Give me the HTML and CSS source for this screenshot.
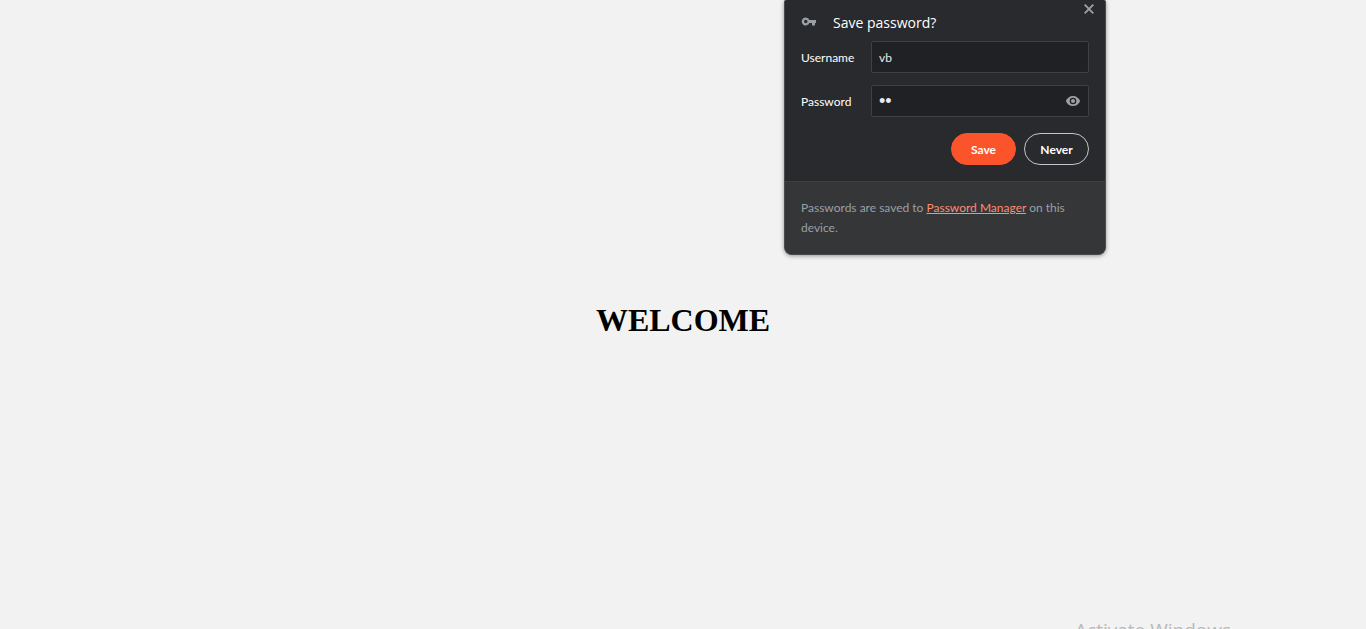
FILE: index.html
```html
<!DOCTYPE html>
<html lang="en">
<head>
<meta charset="utf-8">
<meta name="viewport" content="width=device-width, initial-scale=1">
<title>Welcome</title>
<link rel="stylesheet" href="styles.css">
</head>
<body>
<main class="page">
  <h1 class="welcome">WELCOME</h1>
</main>

<form class="dialog" aria-labelledby="dialog-title">
  <button class="close" type="button" aria-label="Close">
    <svg width="10" height="10" viewBox="0 0 10 10" aria-hidden="true"><path d="M.7.7l8.6 8.6M9.3.7L.7 9.3" stroke="currentColor" stroke-width="1.9"/></svg>
  </button>
  <div class="dialog-body">
    <header class="dialog-header">
      <svg class="key" width="16" height="16" viewBox="0 0 16 16" aria-hidden="true"><path fill="currentColor" fill-rule="evenodd" d="M8.400 5H15v3h-1v2.500h-3V8H8.400A4 4 0 1 1 8.400 5ZM4.800 4.800a1.700 1.700 0 1 0 0 3.400a1.700 1.700 0 0 0 0-3.400Z"/></svg>
      <h2 class="dialog-title" id="dialog-title">Save password?</h2>
    </header>
    <div class="fields">
      <label for="username">Username</label>
      <div class="field"><input id="username" type="text" value="vb" autocomplete="off"></div>
      <label for="password">Password</label>
      <div class="field">
        <input class="secret" id="password" type="password" value="vb" autocomplete="off">
        <button class="reveal" type="button" aria-label="Show password">
          <svg width="16" height="16" viewBox="0 0 16 16" aria-hidden="true"><path fill="currentColor" fill-rule="evenodd" d="M8 3C4.800 3 2 5 .8 8C2 11 4.800 13 8 13s6-2 7.200-5C14 5 11.200 3 8 3Zm0 1.700a3.300 3.300 0 1 1 0 6.600a3.300 3.300 0 0 1 0-6.600Z"/><circle cx="8" cy="8" r="2" fill="currentColor"/></svg>
        </button>
      </div>
    </div>
    <div class="actions">
      <button class="btn btn-primary" type="button">Save</button>
      <button class="btn" type="button">Never</button>
    </div>
  </div>
  <footer class="dialog-footer">Passwords are saved to <a href="#">Password Manager</a> on this device.</footer>
</form>

<div class="watermark">Activate Windows</div>
</body>
</html>
```
FILE: styles.css
```css
* {
  box-sizing: border-box;
}

body {
  margin: 0;
  background: #f2f2f2;
  color: #000;
  font-family: "Open Sans", "Noto Sans", sans-serif;
  overflow: hidden;
}

.page {
  min-height: 100vh;
  display: flex;
  align-items: center;
  justify-content: center;
  padding-top: 10px;
}

.welcome {
  margin: 0;
  font: bold 32px/36px "Liberation Serif", serif;
}

.dialog {
  position: absolute;
  top: 0;
  right: 260px;
  width: 322px;
  border: 1px solid #4a4b4d;
  border-top: 0;
  border-radius: 2px 2px 8px 8px;
  background: #292a2d;
  color: #fff;
  font-family: Lato, "Open Sans", sans-serif;
  font-size: 12px;
  box-shadow: 0 1px 4px rgba(0, 0, 0, 0.4);
  overflow: hidden;
}

.dialog-body {
  padding: 13px 16px 16px;
}

.dialog-header {
  display: flex;
  align-items: center;
  gap: 16px;
  margin-bottom: 8px;
}

.key {
  color: #9aa0a6;
}

.dialog-title {
  margin: 0;
  font-family: "Open Sans", sans-serif;
  font-size: 14px;
  font-weight: 400;
  line-height: 20px;
}

.close,
.reveal {
  position: absolute;
  display: flex;
  padding: 0;
  border: 0;
  background: none;
  color: #9aa0a6;
}

.close {
  top: 4px;
  right: 11px;
}

.fields {
  display: grid;
  grid-template-columns: auto 218px;
  justify-content: space-between;
  align-items: center;
  row-gap: 12px;
}

.field {
  position: relative;
}

.field input {
  display: block;
  width: 100%;
  height: 32px;
  padding: 0 7px;
  border: 1px solid #3f4043;
  border-radius: 2px;
  background: #202124;
  color: #e8eaed;
  font: inherit;
}

.field .secret {
  padding-right: 32px;
  font-family: "Liberation Sans", sans-serif;
  font-size: 18px;
}

.reveal {
  top: 8px;
  right: 8px;
}

.actions {
  display: flex;
  justify-content: flex-end;
  gap: 8px;
  margin-top: 16px;
}

.btn {
  width: 65px;
  height: 32px;
  padding: 0;
  border: 1px solid #c2c4cf;
  border-radius: 16px;
  background: transparent;
  color: #fff;
  font: inherit;
  font-weight: 700;
}

.btn-primary {
  border-color: #fb542b;
  background: #fb542b;
}

.dialog-footer {
  padding: 16px;
  border-top: 1px solid #3f4042;
  background: #353638;
  color: #9aa0a6;
  line-height: 20px;
}

.dialog-footer a {
  color: #ff8d70;
}

.watermark {
  position: absolute;
  right: 135px;
  bottom: -15px;
  color: #b9b9b9;
  font-size: 19px;
  line-height: 28px;
}
```
